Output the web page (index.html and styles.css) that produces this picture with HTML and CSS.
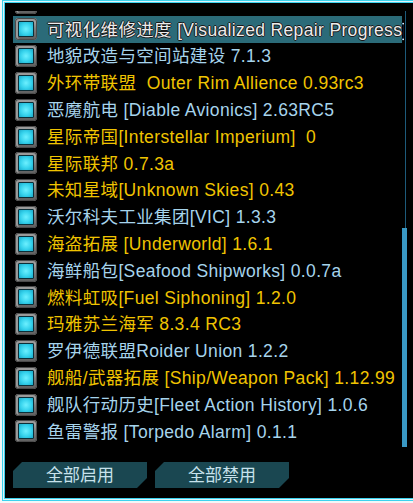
FILE: index.html
```html
<!DOCTYPE html>
<html lang="zh-CN">
<head>
<meta charset="utf-8">
<title>Mod 列表</title>
<link rel="stylesheet" href="styles.css">
</head>
<body>
<div class="frame">
  <div class="panel">
    <div class="list">
      <div class="viewport">
        <div class="rows">
          <div class="row"><span class="check"></span><span class="label"></span></div>
          <div class="row selected"><span class="check"></span><span class="label">可视化维修进度 [Visualized Repair Progress]</span></div>
          <div class="row blue"><span class="check"></span><span class="label">地貌改造与空间站建设 7.1.3</span></div>
          <div class="row yellow"><span class="check"></span><span class="label">外环带联盟&nbsp; Outer Rim Allience 0.93rc3</span></div>
          <div class="row blue"><span class="check"></span><span class="label">恶魔航电 [Diable Avionics] 2.63RC5</span></div>
          <div class="row yellow"><span class="check"></span><span class="label">星际帝国[Interstellar Imperium]&nbsp; 0</span></div>
          <div class="row yellow"><span class="check"></span><span class="label">星际联邦 0.7.3a</span></div>
          <div class="row yellow"><span class="check"></span><span class="label">未知星域[Unknown Skies] 0.43</span></div>
          <div class="row blue"><span class="check"></span><span class="label">沃尔科夫工业集团[VIC] 1.3.3</span></div>
          <div class="row yellow"><span class="check"></span><span class="label">海盗拓展 [Underworld] 1.6.1</span></div>
          <div class="row blue"><span class="check"></span><span class="label">海鲜船包[Seafood Shipworks] 0.0.7a</span></div>
          <div class="row yellow"><span class="check"></span><span class="label">燃料虹吸[Fuel Siphoning] 1.2.0</span></div>
          <div class="row yellow"><span class="check"></span><span class="label">玛雅苏兰海军 8.3.4 RC3</span></div>
          <div class="row blue"><span class="check"></span><span class="label">罗伊德联盟Roider Union 1.2.2</span></div>
          <div class="row yellow"><span class="check"></span><span class="label">舰船/武器拓展 [Ship/Weapon Pack] 1.12.99</span></div>
          <div class="row blue"><span class="check"></span><span class="label">舰队行动历史[Fleet Action History] 1.0.6</span></div>
          <div class="row blue"><span class="check"></span><span class="label">鱼雷警报 [Torpedo Alarm] 0.1.1</span></div>
        </div>
      </div>
      <div class="scrollbar"><div class="track"></div><div class="thumb"></div></div>
    </div>
    <div class="actions">
      <button class="btn">全部启用</button>
      <button class="btn">全部禁用</button>
    </div>
  </div>
</div>
</body>
</html>
```
FILE: styles.css
```css
html, body {
  margin: 0;
  padding: 0;
}
body {
  width: 413px;
  height: 503px;
  overflow: hidden;
  background: #f3f6f7;
  font-family: "Liberation Sans", "Noto Sans CJK SC", sans-serif;
}
.frame {
  margin-left: 2px;
  width: 430px;
  height: 501px;
  box-sizing: border-box;
  border: 1px solid #3cd2ee;
  border-right: none;
  padding: 1px 0 1px 1px;
  background: #dff5fa;
}
.panel {
  height: 100%;
  box-sizing: border-box;
  border: 1px solid #3cd2ee;
  border-right: none;
  background: #000;
  padding: 8px 0 0 8px;
  display: flex;
  flex-direction: column;
}
.list {
  display: flex;
  height: 436px;
}
.viewport {
  width: 391px;
  height: 100%;
  overflow: hidden;
}
.rows {
  margin-top: -21.8px;
}
.row {
  width: 389px;
  height: 26.8px;
  box-sizing: border-box;
  padding-left: 2px;
  display: flex;
  align-items: center;
  gap: 10px;
  white-space: nowrap;
  font-size: 17.5px;
  letter-spacing: 0.35px;
}
.row.selected {
  background: #2b6b79;
  color: #ececec;
  text-shadow: 1px 0 0 #1a1a1a, -1px 0 0 #1a1a1a, 0 1px 0 #1a1a1a, 0 -1px 0 #1a1a1a;
}
.row.blue {
  color: #a6d4ec;
}
.row.yellow {
  color: #f0c400;
}
.label {
  line-height: 1;
  padding-top: 2px;
}
.check {
  flex: none;
  width: 22px;
  height: 22px;
  box-sizing: border-box;
  border-radius: 4px;
  padding: 3px;
  background: linear-gradient(#b4b4b4, #7c7c7c 50%, #5e5e5e);
  box-shadow: inset 0 0 0 1px #4a4a4a, inset 1px 1px 0 2px #9a9a9a;
}
.check::before {
  content: "";
  display: block;
  width: 100%;
  height: 100%;
  box-sizing: border-box;
  border: 1px solid #0c2f38;
  border-radius: 1px;
  background: radial-gradient(circle at 50% 50%, #6df0ff 0%, #35d2ec 55%, #1aa8c8 100%);
}
.scrollbar {
  position: relative;
  margin-left: -2px;
  width: 5px;
  height: 100%;
  display: flex;
  flex-direction: column;
}
.track {
  flex: 1;
  width: 1px;
  margin-left: 3px;
  background: #1d5a7a;
}
.thumb {
  height: 219px;
  background: #3a98c4;
}
.actions {
  display: flex;
  gap: 8px;
  margin-top: 15px;
}
.btn {
  width: 134px;
  height: 26px;
  padding: 0;
  border: none;
  background: #1a4751;
  color: #c8e2ec;
  font-family: "Liberation Sans", "Noto Sans CJK SC", sans-serif;
  font-size: 17px;
  line-height: 28px;
  clip-path: polygon(9px 0, 100% 0, 100% calc(100% - 10px), calc(100% - 10px) 100%, 0 100%, 0 9px);
}
```
